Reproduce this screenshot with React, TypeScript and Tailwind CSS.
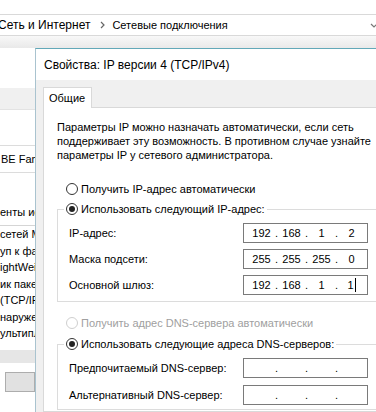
import React from "react";

const listRows = [
  "сетей Microsoft",
  "уп к файлам и принтерам",
  "ightWeight Filter",
  "ик пакетов QoS",
  "(TCP/IPv4)",
  "наружения топологии",
  "ультиплексора",
];

function Radio({ checked, disabled }: { checked?: boolean; disabled?: boolean }) {
  return (
    <span
      className={`flex h-[12px] w-[12px] shrink-0 items-center justify-center rounded-full border bg-white ${
        disabled ? "border-[#cfcfcf]" : "border-[#333333]"
      }`}
    >
      {checked && <span className="h-[6px] w-[6px] rounded-full bg-[#222222]" />}
    </span>
  );
}

function IpBox({ parts, caret }: { parts: string[]; caret?: boolean }) {
  return (
    <div className="flex h-[20px] w-[125px] shrink-0 items-center border border-[#7a7a7a] bg-white pl-[4px]">
      {parts.map((p, i) => (
        <React.Fragment key={i}>
          {i > 0 && <span className="w-[3px] text-center">.</span>}
          <span className="flex w-[27px] items-center justify-center">
            {p}
            {caret && i === 3 && <span className="ml-[1px] h-[14px] w-px bg-black" />}
          </span>
        </React.Fragment>
      ))}
    </div>
  );
}

function Field({ label, parts, caret }: { label: string; parts: string[]; caret?: boolean }) {
  return (
    <div className="flex h-[20px] items-center">
      <span className="w-[185px] shrink-0 pl-[11px] whitespace-nowrap">{label}</span>
      <IpBox parts={parts} caret={caret} />
    </div>
  );
}

export default function App() {
  const empty = ["", "", "", ""];
  return (
    <div className="relative h-[412px] w-[376px] overflow-hidden bg-white font-['Liberation_Sans',Arial,sans-serif] text-[12px] leading-[14px] text-black">
      <div className="h-[14px] bg-white" />

      {/* explorer address bar */}
      <div className="flex h-[22px] items-center border-y border-[#d9d9d9] bg-white whitespace-nowrap">
        <span className="ml-[-2px]">Сеть и Интернет</span>
        <svg className="ml-[10px]" width="5" height="8" viewBox="0 0 5 8">
          <path d="M1 1l3 3-3 3" fill="none" stroke="#666" strokeWidth="1.2" />
        </svg>
        <span className="ml-[7px] text-[11px]">Сетевые подключения</span>
        <svg className="ml-auto mr-[-2px]" width="8" height="5" viewBox="0 0 8 5">
          <path d="M1 1l3 3 3-3" fill="none" stroke="#777" strokeWidth="1.2" />
        </svg>
      </div>
      <div className="h-[12px] bg-linear-to-b from-[#f8f8f8] to-[#e9e9e9]" />

      <div className="flex h-[364px] text-[11px]">
        {/* window behind the dialog */}
        <div className="w-[35px] shrink-0 overflow-hidden bg-white whitespace-nowrap">
          <div className="h-[40px]" />
          <div className="h-[22px] border-b border-[#e3e3e3] bg-[#f0f0f0]" />
          <div className="h-[35px]" />
          <div className="flex h-[28px] items-center border-y border-[#dcdcdc] pl-[1px]">BE Family Controller</div>
          <div className="h-[32px]" />
          <div className="h-[14px]">енты используются</div>
          <div className="h-[6px]" />
          <div className="border-t border-[#d5d5d5]">
            {listRows.map((r) => (
              <div key={r} className="h-[16.5px] leading-[16.5px]">
                {r}
              </div>
            ))}
          </div>
          <div className="h-[8px]" />
          <div className="h-[13px] bg-[#e6e6e6]" />
          <div className="h-[9px]" />
          <div className="ml-[5px] h-[20px] border border-[#adadad] bg-[#e1e1e1]" />
        </div>

        {/* dialog */}
        <div className="flex w-[360px] shrink-0 flex-col border-l border-t border-l-[#a9c3cf] border-t-[#62a8b8]">
          <div className="flex h-[31px] items-center bg-white pl-[8px] text-[12px] whitespace-nowrap">
            Свойства: IP версии 4 (TCP/IPv4)
          </div>
          <div className="flex flex-1 flex-col bg-[#f0f0f0] pl-[7px] pt-[7px]">
            <div className="relative z-10 -mb-px h-[21px] w-[49px] border border-b-0 border-[#d9d9d9] bg-white pl-[5px] leading-[20px]">
              Общие
            </div>
            <div className="flex-1 border border-[#d9d9d9] bg-white pl-[13px] pt-[12px] whitespace-nowrap">
              <p>
                Параметры IP можно назначать автоматически, если сеть
                <br />
                поддерживает эту возможность. В противном случае узнайте
                <br />
                параметры IP у сетевого администратора.
              </p>

              <div className="mt-[19px] flex h-[16px] items-center gap-[3px] pl-[9px]">
                <Radio />
                <span>Получить IP-адрес автоматически</span>
              </div>

              <fieldset className="mt-[4px] border border-[#dcdcdc] pt-[6px] pb-[6px]">
                <legend className="ml-[6px] px-[2px]">
                  <span className="flex h-[16px] items-center gap-[3px]">
                    <Radio checked />
                    <span>Использовать следующий IP-адрес:</span>
                  </span>
                </legend>
                <div className="flex flex-col gap-[6px]">
                  <Field label="IP-адрес:" parts={["192", "168", "1", "2"]} />
                  <Field label="Маска подсети:" parts={["255", "255", "255", "0"]} />
                  <Field label="Основной шлюз:" parts={["192", "168", "1", "1"]} caret />
                </div>
              </fieldset>

              <div className="mt-[13px] flex h-[16px] items-center gap-[3px] pl-[9px] text-[#a0a0a0]">
                <Radio disabled />
                <span>Получить адрес DNS-сервера автоматически</span>
              </div>

              <fieldset className="mt-[5px] border border-[#dcdcdc] pt-[6px] pb-[4px]">
                <legend className="ml-[6px] px-[2px]">
                  <span className="flex h-[16px] items-center gap-[3px]">
                    <Radio checked />
                    <span>Использовать следующие адреса DNS-серверов:</span>
                  </span>
                </legend>
                <div className="flex flex-col gap-[7px]">
                  <Field label="Предпочитаемый DNS-сервер:" parts={empty} />
                  <Field label="Альтернативный DNS-сервер:" parts={empty} />
                </div>
              </fieldset>
            </div>
          </div>
        </div>
      </div>
    </div>
  );
}
